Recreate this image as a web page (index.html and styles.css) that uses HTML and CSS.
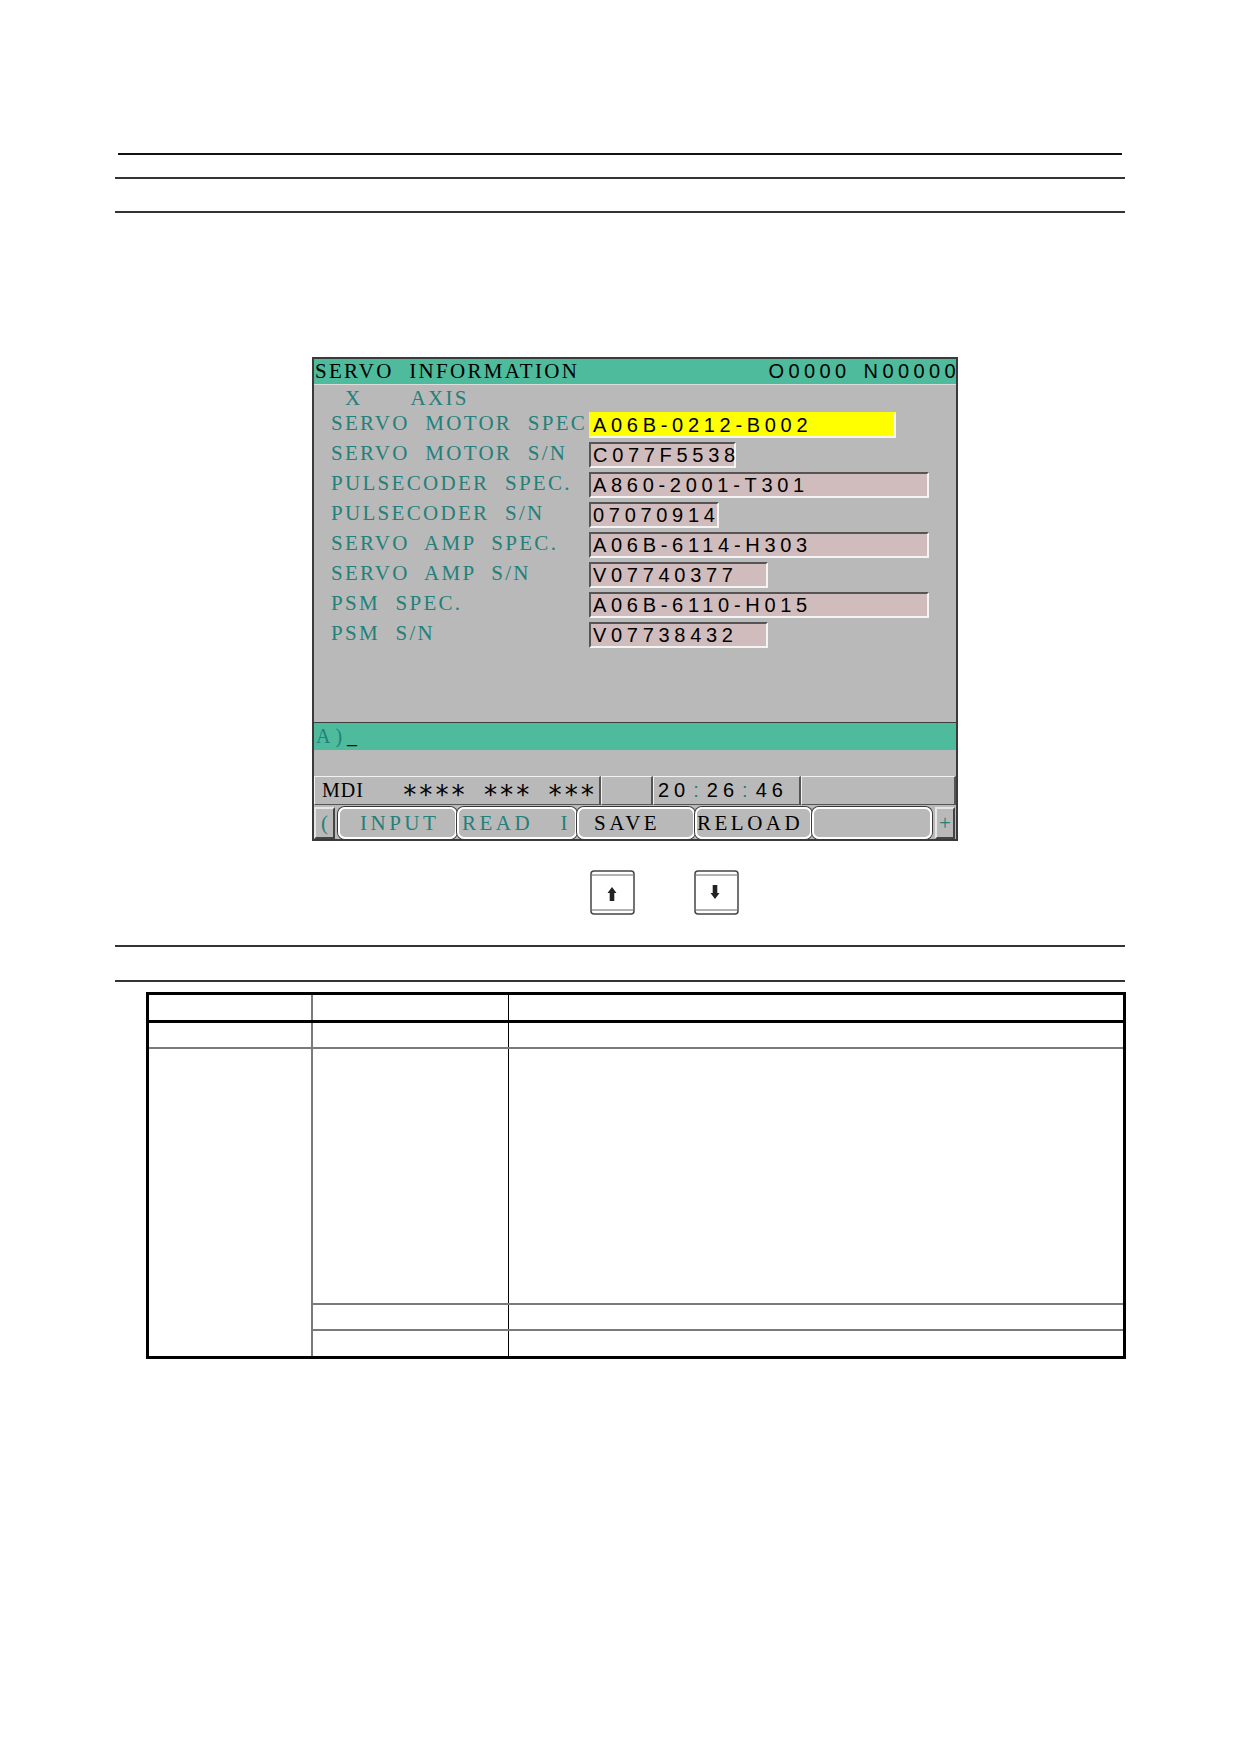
FILE: index.html
```html
<!DOCTYPE html>
<html lang="en">
<head>
    <meta charset="UTF-8">
    <meta name="viewport" content="width=device-width, initial-scale=1.0">
    <title>Servo information</title>
    <link rel="stylesheet" href="styles.css">
</head>
<body>
    <div class="page">
        <hr class="rule rule-top">
        <hr class="rule rule-mid">
        <hr class="rule rule-low">

        <!-- CNC screen: servo information -->
        <div class="screen">
            <div class="title-bar">
                <span class="title">SERVO INFORMATION</span>
                <span class="prog">O0000 N00000</span>
            </div>

            <div class="data">
                <div class="axis"><span>X</span><span>AXIS</span></div>
                <div class="field">
                    <span class="label">SERVO MOTOR SPEC</span>
                    <span class="value w19 current">A06B-0212-B002</span>
                </div>
                <div class="field">
                    <span class="label">SERVO MOTOR S/N</span>
                    <span class="value w9">C077F5538</span>
                </div>
                <div class="field">
                    <span class="label">PULSECODER SPEC.</span>
                    <span class="value w21">A860-2001-T301</span>
                </div>
                <div class="field">
                    <span class="label">PULSECODER S/N</span>
                    <span class="value w8">07070914</span>
                </div>
                <div class="field">
                    <span class="label">SERVO AMP SPEC.</span>
                    <span class="value w21">A06B-6114-H303</span>
                </div>
                <div class="field">
                    <span class="label">SERVO AMP S/N</span>
                    <span class="value w11">V07740377</span>
                </div>
                <div class="field">
                    <span class="label">PSM SPEC.</span>
                    <span class="value w21">A06B-6110-H015</span>
                </div>
                <div class="field">
                    <span class="label">PSM S/N</span>
                    <span class="value w11">V07738432</span>
                </div>
            </div>

            <div class="input-line"><span class="prompt">A)</span><span class="cursor">_</span></div>

            <div class="status">
                <div class="cell cell-mode"><span class="mode">MDI</span><span class="stars">**** *** ***</span></div>
                <div class="cell cell-gap"></div>
                <div class="cell cell-time">20<span class="colon">:</span>26<span class="colon">:</span>46</div>
                <div class="cell cell-end"></div>
            </div>

            <div class="softkeys">
                <div class="nav-key">(</div>
                <div class="key key-input">INPUT</div>
                <div class="key key-read"><span>READ</span><span>I</span></div>
                <div class="key key-save">SAVE</div>
                <div class="key key-reload">RELOAD</div>
                <div class="key key-empty"></div>
                <div class="nav-key">+</div>
            </div>
        </div>

        <!-- page up / page down keys -->
        <div class="page-keys">
            <svg class="page-key" width="45" height="45" viewBox="0 0 45 45">
                <rect x="1" y="1" width="43" height="43" rx="3" fill="#fff" stroke="#444" stroke-width="1.5"/>
                <line x1="2" y1="5" x2="43" y2="5" stroke="#666" stroke-width="1"/>
                <line x1="2" y1="40" x2="43" y2="40" stroke="#666" stroke-width="1"/>
                <path d="M22 17 L26.5 23 L24.3 23 L24.3 31 L19.7 31 L19.7 23 L17.5 23 Z" fill="#222"/>
            </svg>
            <svg class="page-key" width="45" height="45" viewBox="0 0 45 45">
                <rect x="1" y="1" width="43" height="43" rx="3" fill="#fff" stroke="#444" stroke-width="1.5"/>
                <line x1="2" y1="5" x2="43" y2="5" stroke="#666" stroke-width="1"/>
                <line x1="2" y1="40" x2="43" y2="40" stroke="#666" stroke-width="1"/>
                <path d="M21 29 L25.5 23 L23.3 23 L23.3 15 L18.7 15 L18.7 23 L16.5 23 Z" fill="#222"/>
            </svg>
        </div>

        <hr class="rule rule-sec">
        <hr class="rule rule-sub">

        <table class="spec-table">
            <colgroup>
                <col class="col-a">
                <col class="col-b">
                <col class="col-c">
            </colgroup>
            <tr class="row-head"><td class="ca"></td><td class="cb"></td><td class="cc"></td></tr>
            <tr class="row-short"><td class="ca"></td><td class="cb"></td><td class="cc"></td></tr>
            <tr class="row-tall"><td class="ca" rowspan="3"></td><td class="cb"></td><td class="cc"></td></tr>
            <tr class="row-short"><td class="cb"></td><td class="cc"></td></tr>
            <tr class="row-last"><td class="cb"></td><td class="cc"></td></tr>
        </table>
    </div>
</body>
</html>
```

FILE: styles.css
```css
body {
    margin: 0;
    background: #fff;
    font-family: "Liberation Serif", serif;
}
.page {
    width: 1239px;
    display: flow-root;
}

/* horizontal rules */
.rule {
    border: 0;
    height: 2px;
    margin: 0;
    background: #333;
}
.rule-top {
    margin-top: 153px;
    margin-left: 118px;
    width: 1004px;
    background: #111;
}
.rule-mid {
    margin-top: 22px;
    margin-left: 115px;
    width: 1010px;
}
.rule-low {
    margin-top: 32px;
    margin-left: 115px;
    width: 1010px;
}
.rule-sec {
    margin-top: 30px;
    margin-left: 115px;
    width: 1010px;
}
.rule-sub {
    margin-top: 33px;
    margin-left: 115px;
    width: 1010px;
}

/* screen */
.screen {
    margin-top: 144px;
    margin-left: 312px;
    width: 642px;
    border: 2px solid #3a3a3a;
    background: #b9b9b9;
    font-size: 21px;
    letter-spacing: 2.3px;
    word-spacing: 8px;
    white-space: nowrap;
}
.title-bar {
    display: flex;
    height: 25px;
    line-height: 24px;
    background: #4dbb9c;
    border-bottom: 1px solid #dcdcdc;
    color: #000;
}
.title {
    padding-left: 1px;
}
.prog {
    margin-left: auto;
    margin-right: -4px;
    font-family: "Liberation Sans", sans-serif;
    font-size: 20px;
    letter-spacing: 4.4px;
    word-spacing: 3px;
}

.data {
    height: 337px;
    color: #23807a;
}
.axis {
    display: flex;
    gap: 48px;
    height: 27px;
    line-height: 26px;
    padding-left: 31px;
}
.field {
    display: flex;
    align-items: flex-start;
    height: 30px;
}
.label {
    width: 258px;
    padding-left: 17px;
    line-height: 22px;
}
.value {
    box-sizing: border-box;
    height: 26px;
    line-height: 22px;
    padding-left: 2px;
    background: #d0bcbc;
    border: 2px solid;
    border-color: #555 #f4f4f4 #f4f4f4 #555;
    color: #000;
    font-family: "Liberation Sans", sans-serif;
    font-size: 20px;
    letter-spacing: 4.7px;
    word-spacing: 0;
}
.value.current {
    background: #ffff00;
    border-color: #ffff00 #f4f4f4 #f4f4f4 #ffff00;
}
.w8 { width: 130px; }
.w9 { width: 147px; }
.w11 { width: 179px; }
.w19 { width: 307px; }
.w21 { width: 340px; }

.input-line {
    height: 27px;
    line-height: 27px;
    border-top: 1px solid #3f3f3f;
    background: #4dbb9c;
    padding-left: 2px;
    font-size: 20px;
    letter-spacing: 5px;
}
.prompt {
    color: #23807a;
}
.cursor {
    color: #111;
}

/* status line */
.status {
    display: flex;
    margin-top: 26px;
    height: 29px;
}
.cell {
    box-sizing: border-box;
    height: 29px;
    line-height: 27px;
    border-top: 1px solid #f2f2f2;
    border-left: 1px solid #f2f2f2;
    border-right: 2px solid #555;
    border-bottom: 1px solid #555;
    color: #000;
}
.cell-mode {
    width: 287px;
    padding-left: 7px;
}
.cell-gap { width: 52px; }
.cell-time {
    width: 148px;
    padding-left: 4px;
    font-family: "Liberation Sans", sans-serif;
    font-size: 20px;
    letter-spacing: 5px;
}
.cell-end { width: 155px; }
.mode {
    font-size: 20px;
    letter-spacing: 1px;
}
.stars {
    margin-left: 38px;
    font-family: "DejaVu Sans Mono", monospace;
    font-size: 26px;
    letter-spacing: 0.5px;
    word-spacing: 0;
    vertical-align: -7px;
}
.colon {
    padding: 0 3px;
    color: #23807a;
}

/* soft keys */
.softkeys {
    display: flex;
    gap: 3px;
    margin-top: 2px;
    height: 32px;
}
.nav-key {
    box-sizing: border-box;
    width: 21px;
    height: 32px;
    line-height: 28px;
    text-align: center;
    letter-spacing: 0;
    border: 2px solid;
    border-color: #e6e6e6 #444 #444 #e6e6e6;
    color: #23807a;
}
.nav-key:last-child {
    width: 20px;
}
.softkeys .key + .key {
    margin-left: -3px;
}
.key {
    box-sizing: border-box;
    height: 32px;
    line-height: 28px;
    border: 2px solid #fff;
    border-radius: 7px;
    box-shadow: 0 0 0 1px #3a3a3a;
    letter-spacing: 3.5px;
}
.key-input {
    width: 119px;
    padding-left: 20px;
    color: #23807a;
}
.key-read {
    display: flex;
    justify-content: space-between;
    width: 120px;
    padding: 0 4px 0 3px;
    color: #23807a;
}
.key-save {
    width: 118px;
    padding-left: 15px;
    color: #000;
}
.key-reload {
    width: 117px;
    padding-left: 0;
    color: #000;
}
.key-empty {
    width: 120px;
}

/* page keys */
.page-keys {
    display: flex;
    gap: 59px;
    margin-top: 29px;
    margin-left: 590px;
    height: 45px;
}
.page-key {
    display: block;
}

/* table */
.spec-table {
    margin-top: 10px;
    margin-left: 146px;
    width: 977px;
    table-layout: fixed;
    border-collapse: collapse;
    border: 3px solid #000;
}
.col-a { width: 164px; }
.col-b { width: 197px; }
.col-c { width: 616px; }
.spec-table td {
    padding: 0;
    border-bottom: 2px solid #7a7a7a;
}
.spec-table .ca {
    border-right: 2px solid #7a7a7a;
}
.spec-table .cb {
    border-right: 1px solid #000;
}
.spec-table .row-head td {
    border-bottom: 3px solid #000;
}
.row-head { height: 28px; }
.row-short { height: 26px; }
.row-tall { height: 256px; }
.row-last { height: 28px; }
```
